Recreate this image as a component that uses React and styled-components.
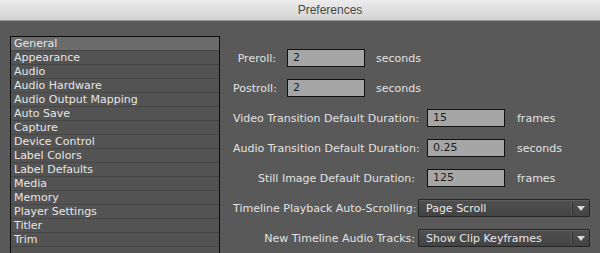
import React from 'react';
import styled, { createGlobalStyle } from 'styled-components';

const GlobalStyle = createGlobalStyle`
  html, body {
    margin: 0;
    padding: 0;
    background: #595959;
    overflow: hidden;
  }
  body {
    font-family: "DejaVu Sans", "Liberation Sans", sans-serif;
    font-size: 11px;
    color: #e2e2e2;
  }
`;

const Window = styled.div`
  width: 600px;
  height: 253px;
  display: flex;
  flex-direction: column;
  background: #595959;
  overflow: hidden;
`;

const TitleBar = styled.div`
  height: 20px;
  flex: 0 0 auto;
  background: linear-gradient(#ececec, #d3d3d3);
  border-bottom: 1px solid #9a9a9a;
  display: flex;
  align-items: center;
  justify-content: center;
  padding-left: 60px;
  font-family: "Liberation Sans", sans-serif;
  font-size: 12px;
  color: #4a4a4a;
`;

const Body = styled.div`
  flex: 1;
  display: flex;
  padding: 15px 0 0 10px;
  gap: 13px;
  min-height: 0;
`;

const Sidebar = styled.ul`
  list-style: none;
  margin: 0;
  padding: 0;
  width: 208px;
  border: 1px solid #0d0d0d;
  border-bottom: none;
  background: #535353;
  overflow: hidden;
`;

const Item = styled.li`
  height: 13px;
  line-height: 13px;
  padding-left: 3px;
  border-bottom: 1px solid #464646;
  background: ${({ selected }) => (selected ? '#6b6b6b' : '#535353')};
  color: #e6e6e6;
  white-space: nowrap;
`;

const Panel = styled.div`
  display: flex;
  flex-direction: column;
  padding-top: 13px;
  gap: 12px;
`;

const Grid = styled.div`
  display: grid;
  grid-template-columns: ${({ labelWidth }) => labelWidth}px 78px auto;
  column-gap: ${({ gap }) => gap}px;
  row-gap: 12px;
  align-items: center;
`;

const Label = styled.div`
  text-align: right;
  white-space: nowrap;
  color: #e2e2e2;
`;

const Field = styled.div`
  height: 16px;
  line-height: 16px;
  padding-left: 5px;
  border: 1px solid #111;
  background: #a6a6a6;
  color: #1e1e1e;
`;

const Unit = styled.div`
  color: #e2e2e2;
  white-space: nowrap;
`;

// dropdowns sit a little left of the text fields' column
const Select = styled.div`
  grid-column: 2 / 4;
  margin-left: -9px;
  width: 170px;
  height: 16px;
  display: flex;
  align-items: center;
  border: 1px solid #262626;
  border-radius: 1px;
  background: linear-gradient(#505050, #434343);
  box-shadow: inset 0 1px 0 #5e5e5e;
  color: #e8e8e8;
`;

const SelectText = styled.span`
  flex: 1;
  padding-left: 7px;
  white-space: nowrap;
`;

const SelectButton = styled.span`
  width: 16px;
  height: 12px;
  display: flex;
  align-items: center;
  justify-content: center;
  border-left: 1px solid #2f2f2f;
  box-shadow: -1px 0 0 #5c5c5c;
`;

const items = [
  'General', 'Appearance', 'Audio', 'Audio Hardware', 'Audio Output Mapping',
  'Auto Save', 'Capture', 'Device Control', 'Label Colors', 'Label Defaults',
  'Media', 'Memory', 'Player Settings', 'Titler', 'Trim',
];

const Arrow = () => (
  <svg width="8" height="5" viewBox="0 0 8 5">
    <path d="M0 0 H8 L4 5 Z" fill="#d8d8d8" />
  </svg>
);

export default function App() {
  return (
    <Window>
      <GlobalStyle />
      <TitleBar>Preferences</TitleBar>
      <Body>
        <Sidebar>
          {items.map((it, i) => (
            <Item key={it} selected={i === 0}>{it}</Item>
          ))}
          <Item />
        </Sidebar>
        <Panel>
          <Grid labelWidth={43} gap={11}>
            <Label>Preroll:</Label>
            <Field>2</Field>
            <Unit>seconds</Unit>
            <Label>Postroll:</Label>
            <Field>2</Field>
            <Unit>seconds</Unit>
          </Grid>
          <Grid labelWidth={182} gap={12}>
            <Label>Video Transition Default Duration:</Label>
            <Field>15</Field>
            <Unit>frames</Unit>
            <Label>Audio Transition Default Duration:</Label>
            <Field>0.25</Field>
            <Unit>seconds</Unit>
            <Label>Still Image Default Duration:</Label>
            <Field>125</Field>
            <Unit>frames</Unit>
            <Label>Timeline Playback Auto-Scrolling:</Label>
            <Select>
              <SelectText>Page Scroll</SelectText>
              <SelectButton><Arrow /></SelectButton>
            </Select>
            <Label>New Timeline Audio Tracks:</Label>
            <Select>
              <SelectText>Show Clip Keyframes</SelectText>
              <SelectButton><Arrow /></SelectButton>
            </Select>
          </Grid>
        </Panel>
      </Body>
    </Window>
  );
}
